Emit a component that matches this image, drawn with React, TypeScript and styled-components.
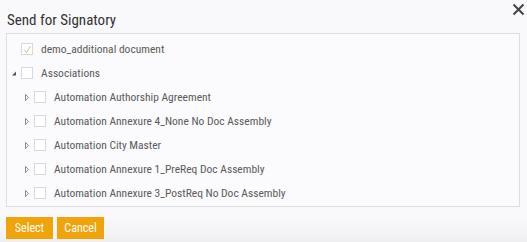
import React from 'react'
import styled, { createGlobalStyle } from 'styled-components'

const FONT = "'Roboto Condensed', Roboto, 'Liberation Sans', sans-serif"

const GlobalStyle = createGlobalStyle`
  html, body {
    margin: 0;
    padding: 0;
    background: #f9f8fb;
  }
  body {
    font-family: ${FONT};
  }
`

const Dialog = styled.div`
  width: 527px;
  height: 242px;
  box-sizing: border-box;
  padding: 0 7px 0 6px;
  background: linear-gradient(to bottom, #f9f8fb 0, #f9f8fb 220px, #efeef1 242px);
  display: flex;
  flex-direction: column;
`

const Header = styled.div`
  height: 33px;
  display: flex;
  align-items: flex-start;
  justify-content: space-between;
`

const Title = styled.h1`
  margin: 10px 0 0 1px;
  font-size: 15px;
  font-weight: 400;
  color: #333;
  line-height: 20px;
`

const Close = styled.button`
  margin: 3px -5px 0 0;
  padding: 0;
  border: 0;
  background: none;
  width: 13px;
  height: 13px;
  display: flex;
  cursor: pointer;
`

const TreePanel = styled.div`
  height: 174px;
  box-sizing: border-box;
  border: 1px solid #dedde0;
  background: #fbfafc;
  padding-top: 3px;
`

const TreeRow = styled.div<{ $level: number }>`
  height: 24px;
  display: flex;
  align-items: center;
  padding-left: ${p => 5 + p.$level * 13}px;
`

const Toggle = styled.span`
  width: 4px;
  height: 24px;
  margin-right: 5px;
  display: flex;
  align-items: center;
  justify-content: flex-start;
`

const Box = styled.span`
  width: 12px;
  height: 12px;
  box-sizing: border-box;
  border: 1px solid #d9d9dc;
  background: #fff;
  display: flex;
  align-items: center;
  justify-content: center;
  margin-right: 8px;
`

const Label = styled.span`
  font-size: 11.5px;
  color: #5a5a5a;
  white-space: nowrap;
`

const Footer = styled.div`
  display: flex;
  gap: 4px;
  padding-top: 10px;
`

const Button = styled.button`
  height: 22px;
  width: 47px;
  padding: 0;
  border: 0;
  background: #f0a30a;
  color: #fff;
  font-family: ${FONT};
  font-size: 12px;
  cursor: pointer;
`

function Arrow({ open }: { open?: boolean }) {
  if (open) {
    return (
      <svg width="5" height="5" viewBox="0 0 5 5">
        <path d="M5 0 L5 5 L0 5 Z" fill="#555" />
      </svg>
    )
  }
  return (
    <svg width="4" height="7" viewBox="0 0 4 7">
      <path d="M0.5 0.5 L3.5 3.5 L0.5 6.5 Z" fill="none" stroke="#888" strokeWidth="1" />
    </svg>
  )
}

type Node = {
  label: string
  level: number
  toggle?: 'open' | 'closed'
  checked?: boolean
}

const nodes: Node[] = [
  { label: 'demo_additional document', level: 1, checked: true },
  { label: 'Associations', level: 1, toggle: 'open' },
  { label: 'Automation Authorship Agreement', level: 2, toggle: 'closed' },
  { label: 'Automation Annexure 4_None No Doc Assembly', level: 2, toggle: 'closed' },
  { label: 'Automation City Master', level: 2, toggle: 'closed' },
  { label: 'Automation Annexure 1_PreReq Doc Assembly', level: 2, toggle: 'closed' },
  { label: 'Automation Annexure 3_PostReq No Doc Assembly', level: 2, toggle: 'closed' },
]

export default function App() {
  return (
    <>
      <GlobalStyle />
      <Dialog>
        <Header>
          <Title>Send for Signatory</Title>
          <Close aria-label="Close">
            <svg width="13" height="13" viewBox="0 0 13 13">
              <path d="M1.5 1.5 L11.5 11.5 M11.5 1.5 L1.5 11.5" stroke="#444" strokeWidth="2" />
            </svg>
          </Close>
        </Header>
        <TreePanel>
          {nodes.map(n => (
            <TreeRow key={n.label} $level={n.level - 1}>
              <Toggle>{n.toggle && <Arrow open={n.toggle === 'open'} />}</Toggle>
              <Box>
                {n.checked && (
                  <svg width="9" height="9" viewBox="0 0 9 9">
                    <path d="M1.5 5 L3.5 7.5 L7.5 1" fill="none" stroke="#b9cf9a" strokeWidth="1" />
                  </svg>
                )}
              </Box>
              <Label>{n.label}</Label>
            </TreeRow>
          ))}
        </TreePanel>
        <Footer>
          <Button>Select</Button>
          <Button>Cancel</Button>
        </Footer>
      </Dialog>
    </>
  )
}
